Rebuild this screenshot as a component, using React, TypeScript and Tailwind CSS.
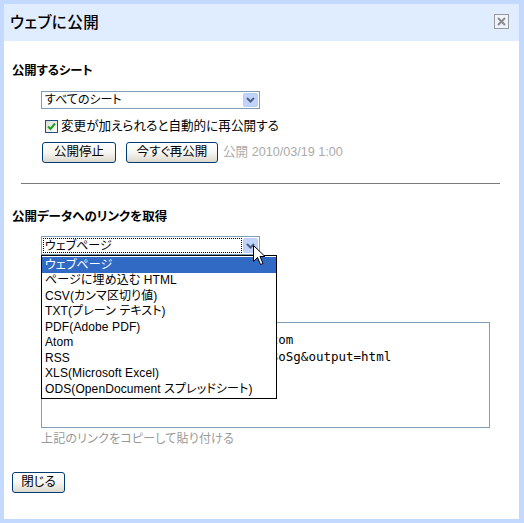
import React from "react";

const font = "font-['Liberation_Sans','Noto_Sans_CJK_JP',sans-serif] [font-feature-settings:'palt']";

function XPButton({ children, w }: { children: React.ReactNode; w: string }) {
  return (
    <div
      className={`${w} h-[21px] flex items-center justify-center rounded-[3px] border border-[#003c74] bg-gradient-to-b from-white via-[#f6f6f2] to-[#dcd8cc] text-[12.5px] text-black leading-none`}
    >
      {children}
    </div>
  );
}

function Chevron() {
  return (
    <svg width="9" height="6" viewBox="0 0 9 6">
      <path d="M1 1 L4.5 4.5 L8 1" fill="none" stroke="#4d6185" strokeWidth="2" />
    </svg>
  );
}

function SelectBox({ text, focus }: { text: string; focus?: boolean }) {
  return (
    <div className="w-[219px] h-full border border-[#7f9db9] bg-white flex items-stretch">
      <div className="flex-1 flex items-stretch p-[1px]">
        <div
          className={`flex-1 flex items-center pl-[2px] text-[12px] leading-none ${
            focus ? "outline outline-1 outline-dotted outline-black -outline-offset-1" : ""
          }`}
        >
          {text}
        </div>
      </div>
      <div className="w-[15px] my-[1px] mr-[1px] rounded-[2px] bg-[#c1d3fb] border border-[#b9cdf6] flex items-center justify-center">
        <Chevron />
      </div>
    </div>
  );
}

const options = [
  "ウェブページ",
  "ページに埋め込む HTML",
  "CSV(カンマ区切り値)",
  "TXT(プレーン テキスト)",
  "PDF(Adobe PDF)",
  "Atom",
  "RSS",
  "XLS(Microsoft Excel)",
  "ODS(OpenDocument スプレッドシート)",
];

export default function App() {
  return (
    <div className={`w-[524px] h-[523px] bg-[#c3d9ff] pt-[4px] pl-[4px] pr-[5px] pb-[4px] flex flex-col ${font}`}>
      <div className="h-[37px] bg-[#e0ecff] flex items-center justify-between pl-[6px] pr-[10px]">
        <div className="text-[15.5px] font-medium text-black leading-none tracking-[0.5px]">ウェブに公開</div>
        <div className="w-[15px] h-[15px] border border-[#999] bg-[#eef3fd] flex items-center justify-center -mt-[2px]">
          <svg width="9" height="9" viewBox="0 0 9 9">
            <path d="M1 1 L8 8 M8 1 L1 8" stroke="#8a8a8a" strokeWidth="2" />
          </svg>
        </div>
      </div>
      <div className="flex-1 bg-white pl-[8px] flex flex-col">
        <div className="mt-[22px] h-[16px] leading-[16px] text-[12.3px] font-bold text-black">公開するシート</div>
        <div className="mt-[12px] h-[18px] ml-[29px]">
          <SelectBox text="すべてのシート" />
        </div>
        <div className="mt-[10px] h-[14px] ml-[33px] flex items-center gap-[3px]">
          <div className="w-[13px] h-[13px] border border-[#1c5180] bg-gradient-to-br from-[#dcdcd7] to-white flex items-center justify-center">
            <svg width="9" height="9" viewBox="0 0 9 9">
              <path d="M1 4.5 L3.5 7 L8 1.5" fill="none" stroke="#21a121" strokeWidth="2" />
            </svg>
          </div>
          <div className="text-[12.6px] leading-none text-black">変更が加えられると自動的に再公開する</div>
        </div>
        <div className="mt-[9px] h-[21px] ml-[30px] flex items-center">
          <XPButton w="w-[74px]">公開停止</XPButton>
          <div className="ml-[10px]">
            <XPButton w="w-[92px]">今すぐ再公開</XPButton>
          </div>
          <div className="ml-[5px] text-[12.6px] text-[#aaaaaa] leading-none">公開 2010/03/19 1:00</div>
        </div>
        <div className="mt-[20px] ml-[9px] w-[479px] border-t border-[#7a7a7a]" />
        <div className="mt-[25px] h-[16px] leading-[16px] text-[12.5px] font-bold text-black">公開データへのリンクを取得</div>
        <div className="mt-[11px] h-[19px] ml-[29px] relative z-10">
          <SelectBox text="ウェブページ" focus />
          <div className="absolute left-0 top-[19px] w-[236px] border border-black bg-white py-[1px]">
            {options.map((o, i) => (
              <div
                key={o}
                className={`h-[15.5px] flex items-center pl-[3px] text-[12px] leading-none tracking-[0.1px] ${
                  i === 0 ? "bg-[#316ac5] text-white" : "text-black"
                }`}
              >
                {o}
              </div>
            ))}
          </div>
          <svg className="absolute left-[212px] top-[9px]" width="14" height="22" viewBox="0 0 14 22">
            <path
              d="M0.5 0.5 L0.5 16.5 L4.5 12.5 L7.5 19.5 L10 18.5 L7 11.5 L12 11.5 Z"
              fill="white"
              stroke="black"
              strokeWidth="1"
            />
          </svg>
        </div>
        <div className="mt-[67px] ml-[29px] w-[449px] h-[106px] border border-[#7f9db9] pt-[8px] pl-[3px] font-['DejaVu_Sans_Mono',monospace] text-[12.5px] leading-[17px] text-black whitespace-pre overflow-hidden">
          {"https://spreadsheets10.google.com\n/pub?key=pOlM8zQ2aKv7XcYbNdE4r3oSg&output=html"}
        </div>
        <div className="mt-[3px] ml-[29px] h-[16px] leading-[16px] text-[12px] text-[#999999] tracking-[0.2px]">
          上記のリンクをコピーして貼り付ける
        </div>
        <div className="mt-[25px]">
          <XPButton w="w-[53px]">閉じる</XPButton>
        </div>
      </div>
    </div>
  );
}
